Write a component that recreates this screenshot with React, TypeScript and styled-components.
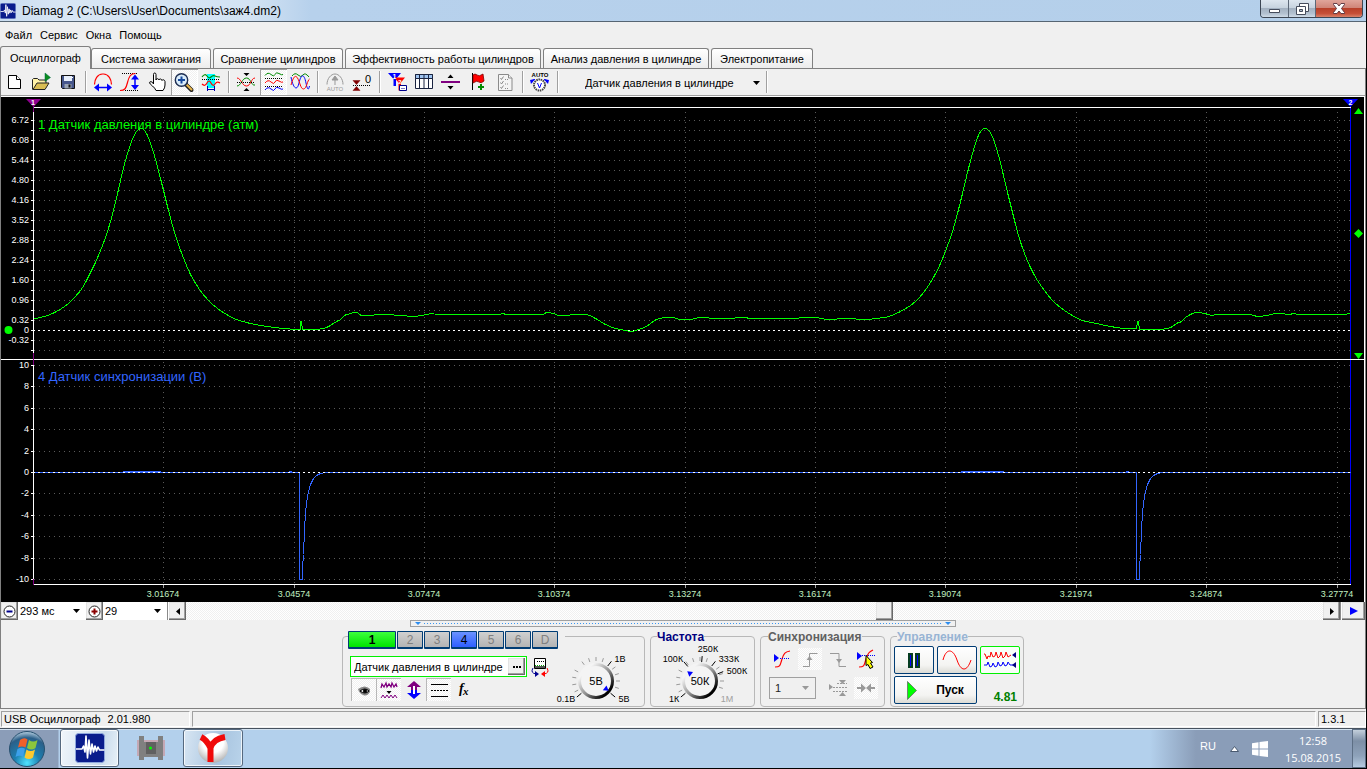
import React from 'react';
import styled, { createGlobalStyle, css } from 'styled-components';

const SANS = '"Liberation Sans", Arial, sans-serif';
const HUMANIST = '"Open Sans", "Noto Sans", sans-serif';
const FACE = '#f0f0f0';
const dither = 'repeating-conic-gradient(#ffffff 0 25%, #f0f0f0 0 50%) 0 0 / 2px 2px';

const GlobalStyle = createGlobalStyle`
  * { box-sizing: border-box; }
  body { margin: 0; background: ${FACE}; font: 11px/14px ${SANS}; color: #000; }
  button, input, select { font: inherit; color: inherit; margin: 0; padding: 0; border: 0; border-radius: 0; background: none; }
  svg { display: block; flex: none; }
`;

const Window = styled.div`
  display: flex;
  flex-direction: column;
  min-height: 100vh;
  border-right: 1px solid #000;
  border-bottom: 1px solid #000;
  background: ${FACE};
`;

/* ---------- title bar ---------- */
const TitleBar = styled.header`
  display: flex;
  align-items: flex-start;
  height: 22px;
  border-bottom: 1px solid #566573;
  background: linear-gradient(90deg, #c9dcf0 0, #d8e6f4 60px, #d3e3f3 250px, #b7d1ec 310px, #b4cfea 100%);
`;
const TitleIcon = styled.div`
  padding-top: 3px;
`;
const TitleText = styled.h1`
  flex: 1;
  margin: 0;
  padding-left: 6px;
  font: 400 12px/22px ${SANS};
`;
const Caption = styled.div`
  display: flex;
  margin-right: 3px;
  border: 1px solid #3c4654;
  border-top: 0;
  border-radius: 0 0 4px 4px;
  overflow: hidden;
`;
const CaptionButton = styled.button<{ $close?: boolean }>`
  display: grid;
  place-items: center;
  width: ${(p) => (p.$close ? 47 : 27)}px;
  height: 17px;
  background: ${(p) =>
    p.$close
      ? 'linear-gradient(#e0a59b 0, #d08578 45%, #b8402a 50%, #c65038 80%, #d9826a 100%)'
      : 'linear-gradient(#dde6ef 0, #c7d3df 45%, #a3b1c1 50%, #b3c1d0 80%, #cfdbe7 100%)'};
  & + & { border-left: 1px solid #5c6878; }
`;

/* ---------- menu and tabs ---------- */
const MenuBar = styled.nav`
  display: flex;
  align-items: center;
  gap: 8px;
  height: 24px;
  padding: 2px 5px 0;
`;
const MenuItem = styled.button`
  font: 11px/14px ${SANS};
`;
const Tabs = styled.div`
  display: flex;
  align-items: flex-end;
  gap: 2px;
  height: 23px;
  border-bottom: 1px solid #808080;
`;
const Tab = styled.button<{ $w: number; $active?: boolean }>`
  width: ${(p) => p.$w}px;
  height: 20px;
  border: 1px solid #808080;
  border-bottom: 0;
  border-radius: 3px 3px 0 0;
  background: linear-gradient(#ffffff, #ececec);
  ${(p) =>
    p.$active &&
    css`
      height: 23px;
      margin: 0 -2px -1px 0;
      background: ${FACE};
      z-index: 1;
    `}
`;

/* ---------- toolbar ---------- */
const Page = styled.main`
  border-left: 1px solid #808080;
  border-right: 1px solid #808080;
`;
const Toolbar = styled.div`
  display: flex;
  align-items: stretch;
  height: 28px;
  border-bottom: 1px solid #fff;
  box-shadow: inset 0 -1px 0 #a0a0a0;
`;
const ToolButton = styled.button<{ $pressed?: boolean }>`
  width: 27px;
  height: 26px;
  ${(p) =>
    p.$pressed &&
    css`
      background: ${dither};
      box-shadow: inset 1px 1px 0 #a0a0a0, inset -1px -1px 0 #fff;
    `}
`;
const Separator = styled.div`
  width: 8px;
  height: 22px;
  margin-top: 2px;
  background: linear-gradient(90deg, transparent 3px, #a0a0a0 3px 4px, #fff 4px 5px, transparent 5px);
`;
const SelectBox = styled.div<{ $w: number; $inset?: number; $arrow?: number; $bg?: string; $border?: string; $color?: string }>`
  display: grid;
  align-items: center;
  width: ${(p) => p.$w}px;
  background: ${(p) => p.$bg || 'transparent'};
  border: ${(p) => p.$border || '0'};
  color: ${(p) => p.$color || '#000'};
  select {
    grid-area: 1 / 1;
    width: 100%;
    height: 100%;
    padding-left: ${(p) => p.$inset || 0}px;
    appearance: none;
    outline: 0;
  }
  svg {
    grid-area: 1 / 1;
    justify-self: end;
    margin-right: ${(p) => p.$arrow || 4}px;
    pointer-events: none;
  }
`;

/* ---------- chart ---------- */
const Chart = styled.section`
  display: grid;
  grid-template-columns: 33px 1fr 13px;
  height: 505px;
  border-right: 1px solid #fff;
  background: #000;
  svg { overflow: visible; }
  svg text { font-family: ${SANS}; }
`;
const Plot = styled.div`
  position: relative;
  min-width: 0;
`;
const ChannelTitle = styled.div<{ $top: number; $color: string }>`
  position: absolute;
  left: 4px;
  top: ${(p) => p.$top}px;
  font-size: 13px;
  line-height: 16px;
  color: ${(p) => p.$color};
`;
const TimeLabel = styled.span`
  position: absolute;
  bottom: 2px;
  transform: translateX(-50%);
  font-size: 9px;
  line-height: 12px;
  color: #c0f0c0;
`;

/* ---------- scroll row ---------- */
const ScrollRow = styled.div`
  display: flex;
  height: 18px;
  background: #fff;
`;
const RaisedButton = styled.button<{ $w: number }>`
  display: grid;
  place-items: center;
  flex: none;
  width: ${(p) => p.$w}px;
  background: ${FACE};
  box-shadow: inset -1px -1px 0 #696969, inset -2px -2px 0 #a0a0a0, inset 1px 1px 0 #e3e3e3;
`;
const Divider = styled.div`
  width: 1px;
  margin-right: 1px;
  background: #8a8a8a;
`;
const ScrollTrack = styled.input`
  flex: 1;
  min-width: 0;
  height: 18px;
  appearance: none;
  background: ${dither};
  &::-webkit-slider-thumb {
    appearance: none;
    width: 17px;
    height: 18px;
    background: ${FACE};
    box-shadow: inset -1px -1px 0 #696969, inset -2px -2px 0 #a0a0a0, inset 1px 1px 0 #e3e3e3;
  }
`;

/* ---------- control panel ---------- */
const ControlPanel = styled.section`
  display: flex;
  flex-direction: column;
  align-items: center;
  gap: 4px;
  height: 88px;
`;
const Splitter = styled.div`
  display: flex;
  align-items: center;
  justify-content: space-between;
  gap: 3px;
  width: 546px;
  height: 7px;
  padding: 0 4px;
  border: 1px solid #a0a0a0;
`;
const SplitterDots = styled.div`
  flex: 1;
  height: 1px;
  background: repeating-linear-gradient(90deg, #3a96f0 0 1px, transparent 1px 3px);
`;
const Groups = styled.div`
  display: flex;
  gap: 5px;
`;
const Group = styled.fieldset<{ $w: number; $pad: string }>`
  width: ${(p) => p.$w}px;
  height: 76px;
  min-width: 0;
  margin: 0;
  padding: ${(p) => p.$pad};
  border: 1px solid #b8b8b8;
  border-radius: 4px;
`;
const Legend = styled.legend<{ $color?: string; $inset?: number }>`
  display: flex;
  gap: 1px;
  height: 10px;
  margin-left: ${(p) => p.$inset || 0}px;
  padding: 0;
  font: bold 12px/12px ${SANS};
  color: ${(p) => p.$color || '#000'};
`;
const ChannelLegend = styled(Legend)`
  padding-right: 7px;
  font: 12px/16px ${SANS};
`;
const ChannelButton = styled.button<{ $kind: 'main' | 'on' | 'off' }>`
  width: ${(p) => (p.$kind === 'main' ? 48 : 26)}px;
  height: 18px;
  border: 1px solid #003c74;
  border-bottom-width: 2px;
  border-radius: 1px;
  color: ${(p) => (p.$kind === 'off' ? '#808080' : '#000')};
  font-weight: ${(p) => (p.$kind === 'main' ? 'bold' : 'normal')};
  background: ${(p) =>
    p.$kind === 'main' ? 'linear-gradient(#3dff3d, #00e400)' : p.$kind === 'on' ? 'linear-gradient(#6a92ff, #2f5fff)' : 'linear-gradient(#d0d0d0, #b4b4b4)'};
`;
const ChannelBody = styled.div`
  display: flex;
  gap: 3px;
  padding-left: 2px;
`;
const ChannelColumn = styled.div`
  display: flex;
  flex-direction: column;
  gap: 1px;
  width: 200px;
  padding-top: 15px;
`;
const FieldRow = styled.div`
  display: flex;
  align-items: center;
  gap: 3px;
`;
const SensorField = styled.div`
  display: flex;
  width: 177px;
  height: 21px;
  padding: 1px;
  border: 1px solid #00f000;
  background: #fff;
  input { flex: 1; min-width: 0; padding-left: 2px; outline: 0; }
`;
const Row = styled.div`
  display: flex;
  padding-left: 1px;
`;
const FlatButton = styled.button<{ $pressed?: boolean }>`
  display: grid;
  place-items: center;
  width: 25px;
  height: 23px;
  ${(p) =>
    p.$pressed &&
    css`
      background: ${dither};
      box-shadow: inset 1px 1px 0 #b8b8b8;
    `}
`;
const SyncGrid = styled.div`
  display: grid;
  grid-template-columns: repeat(4, 28px);
  grid-auto-rows: 22px;
  row-gap: 7px;
  justify-items: center;
  padding-top: 7px;
`;
const SyncSelect = styled(SelectBox)`
  grid-column: span 2;
  justify-self: start;
  margin-left: 1px;
`;
const SyncButton = styled.button<{ $pressed?: boolean }>`
  display: grid;
  place-items: center;
  width: 24px;
  height: 22px;
  background: ${(p) => (p.$pressed ? dither : 'none')};
`;
const RunGrid = styled.div`
  display: grid;
  grid-template-columns: repeat(3, 40px);
  grid-auto-rows: 28px;
  gap: 2px 3px;
  padding-top: 5px;
`;
const RunButton = styled.button<{ $lime?: boolean; $wide?: boolean }>`
  display: flex;
  align-items: center;
  justify-content: center;
  gap: 19px;
  grid-column: span ${(p) => (p.$wide ? 2 : 1)};
  border: ${(p) => (p.$lime ? '1px solid #00f000' : '1px solid #003c74')};
  border-radius: 2px;
  font: bold 12px/16px ${SANS};
  background: ${(p) => (p.$lime ? '#f8fff8' : 'linear-gradient(#ffffff, #f4f4f2 70%, #dcdcd6)')};
`;
const Rate = styled.output`
  align-self: end;
  justify-self: end;
  padding-right: 3px;
  font: bold 12px/14px ${SANS};
  color: #008000;
`;

/* ---------- status bar ---------- */
const StatusBar = styled.footer`
  display: flex;
  gap: 2px;
  height: 20px;
  padding: 2px 0 1px 1px;
  border-top: 1px solid #808080;
  background: ${FACE};
`;
const StatusPane = styled.div<{ $w?: number }>`
  display: flex;
  gap: 7px;
  ${(p) => (p.$w ? `width: ${p.$w}px;` : 'flex: 1;')}
  padding-left: 2px;
  border: 1px solid #fff;
  border-top-color: #a0a0a0;
  border-left-color: #a0a0a0;
  line-height: 15px;
`;

/* ---------- taskbar ---------- */
const Taskbar = styled.div`
  display: flex;
  height: 40px;
  border-top: 1px solid #47525f;
  box-shadow: inset 0 1px 0 #d3e2f0;
  background: linear-gradient(90deg, #8b9db8 0 58px, #b3d0ec 59px calc(100% - 216px), #8a9db8 calc(100% - 170px) 100%);
`;
const StartButton = styled.button`
  display: grid;
  place-items: center;
  width: 54px;
  margin-right: 6px;
`;
const TaskButton = styled.button<{ $w: number; $tone?: 'active' | 'open' }>`
  display: grid;
  place-items: center;
  width: ${(p) => p.$w}px;
  height: 38px;
  ${(p) =>
    p.$tone &&
    css`
      border: 1px solid #56697f;
      border-radius: 3px;
      box-shadow: inset 0 0 0 1px rgba(255, 255, 255, 0.75);
      background: ${p.$tone === 'active' ? 'linear-gradient(100deg, #f1f6fb, #c9dbec 70%, #e8f1f8)' : 'linear-gradient(100deg, #d8e6f3, #a9c5e0 60%, #b9d3ea)'};
    `}
`;
const Tray = styled.div`
  display: flex;
  align-items: center;
  margin-left: auto;
  color: #fff;
`;
const Language = styled.span`
  width: 30px;
  margin-bottom: 6px;
`;
const TrayItem = styled.div<{ $gap: number }>`
  margin-right: ${(p) => p.$gap}px;
`;
const Clock = styled.time`
  width: 56px;
  margin-right: 11px;
  font: 11px/17px ${HUMANIST};
  text-align: center;
`;
const ShowDesktop = styled.button`
  width: 14px;
  height: 39px;
  border: 1px solid #5c6e84;
  background: linear-gradient(#c3cfdb, #7d8fa6 30%, #8ea2ba 70%, #b5cbe0);
`;

/* ---------- small drawings ---------- */
const Arrow = ({ color = '#000' }: { color?: string }) => (
  <svg width="7" height="4" viewBox="0 0 7 4" aria-hidden="true">
    <path d="M0 0h7L3.5 4z" fill={color} />
  </svg>
);
const SplitterMark = () => (
  <svg width="6" height="3" viewBox="0 0 6 3" aria-hidden="true">
    <path d="M0 0h6L3 3z" fill="#2a8cf0" />
  </svg>
);
const AppLogo = ({ size }: { size: number }) => (
  <svg width={size} height={size} viewBox="0 0 30 30" aria-hidden="true">
    <rect x="0.5" y="0.5" width="29" height="29" rx="3" fill="#0a1c8c" stroke="#8ea6dc" />
    <path d="M1 16h6l1.5-3 1.5 6 1-16 1.5 22 1.5-18 1.5 14 1.5-10 1.5 8 1.5-6 1.5 5 1.5-4 1.500 3h5" fill="none" stroke="#fff" strokeWidth="1.6" strokeLinejoin="round" />
  </svg>
);

const TOOL_ART: Record<string, React.ReactNode> = {
  new: (
    <g fill="#fff" stroke="#000">
      <path d="M7.500 6.500h8l4 4v9h-12z" />
      <path d="M15.500 6.500v4h4" />
    </g>
  ),
  open: (
    <g strokeLinejoin="round">
      <path d="M4.500 20.500v-10l1-1h4l1.500 1.500h7v3" fill="#fff2a8" stroke="#222" />
      <path d="M5 20.500l4-6.500h12l-4 6.500z" fill="#d9bd54" stroke="#222" />
      <path d="M17 4v8.500l5.500-4z" fill="#0a8c1e" stroke="#064" strokeWidth="0.500" />
    </g>
  ),
  save: (
    <g>
      <path d="M6.500 6.500h13v13h-12l-1-1z" fill="#47578c" stroke="#111" />
      <path d="M9 7h8v5H9z" fill="#e9f0fb" />
      <path d="M9.500 15h7v4.500h-7z" fill="#9aa4b4" />
      <path d="M13.500 15.500h2v3h-2z" fill="#111" />
      <path d="M17.500 8v1" stroke="#fff" />
    </g>
  ),
  width: (
    <g fill="none">
      <path d="M4.500 15.500c0-5 3-10.500 8-10.500h1c5 0 8 5.500 8 10.500" stroke="#f00" strokeWidth="1.200" />
      <path d="M7 18.500h12" stroke="#00f" strokeWidth="1.500" />
      <path d="M4 18.500l5-4v8zM22 18.500l-5-4v8z" fill="#00f" />
    </g>
  ),
  height: (
    <g fill="none">
      <path d="M5 4.500h15M8 21.500h14" stroke="#000" strokeDasharray="1 1" />
      <path d="M3 21.500c5 0 6-2 7.500-8s3-9 8-9" stroke="#f00" strokeWidth="1.200" />
      <path d="M18 8v11" stroke="#00f" strokeWidth="1.500" />
      <path d="M18 5.500l-4 5h8zM18 21l-4-5h8z" fill="#00f" />
    </g>
  ),
  hand: (
    <path
      d="M9.500 15V5.500q0-1.500 1.200-1.500t1.300 1.500V11q.3-1.500 1.500-1.300T15 11q.3-1.200 1.500-1T18 11.500q.3-1 1.500-.7t1.500 1.700V16q0 3-2 5.500h-7q-1-2.500-3.500-4.500-3-2.300-3-3.300t1.500-1 2.500 2.300z"
      fill="#fff"
      stroke="#000"
    />
  ),
  zoom: (
    <g>
      <path d="M15 15.500l5.500 5.500" stroke="#222" strokeWidth="4" strokeLinecap="round" />
      <path d="M16 16l4.500 4.500" stroke="#e8b54a" strokeWidth="2" strokeLinecap="round" />
      <circle cx="10.500" cy="11" r="6.200" fill="#d9ecfb" stroke="#1c2c50" strokeWidth="1.400" />
      <path d="M10.500 7.500v7M7 11h7" stroke="#16489c" strokeWidth="2" />
    </g>
  ),
  band: (
    <g fill="none">
      <path d="M9 5h8v14H9z" fill="#0ff" />
      <path d="M4 8q3-4 5-1t4 1 4-1 5 1" stroke="#008a00" strokeWidth="1.200" />
      <path d="M4 10.500h18" stroke="#000" strokeDasharray="1 1" />
      <path d="M4 15q3 3 5-1t4 0 4 1 5-1" stroke="#f00" strokeWidth="1.200" />
      <path d="M9.500 17v5M16.500 17v5M10 20.500h6" stroke="#00a" />
    </g>
  ),
  cross: (
    <g fill="none">
      <path d="M4 17c4 0 5-8 9.500-8s4.500 8 8.500 7" stroke="#008a00" />
      <path d="M4 9c4 0 5 8 9.500 8s4.500-8 8.500-8" stroke="#f00" />
      <path d="M4 13.500h18" stroke="#000" strokeDasharray="1 1" />
      <path d="M10.500 4h6l-3 3zM10.500 22h6l-3-3z" fill="#000" />
    </g>
  ),
  stack: (
    <g fill="none">
      <path d="M5 6.500q3-4 6-1t4 0 4-1 4 1" stroke="#008a00" />
      <path d="M5 14q3-4 6-1t4 0 4-1 4 1" stroke="#f00" />
      <path d="M5 21q3-4 6-1t4 0 4-1 4 1" stroke="#00f" />
      <path d="M5 9.500h18M5 17.500h18" stroke="#000" strokeDasharray="1 1" />
    </g>
  ),
  overlap: (
    <g fill="none">
      <path d="M5 7q3-4 6-1t5 0 6 2" stroke="#008a00" />
      <path d="M4 8c2 11 6 15 8 6s5-10 7 0 3 5 3.500 3" stroke="#00f" />
      <path d="M4 16c2-7 4-11 6.500-7s3 11 6 11 4-9 6-10" stroke="#f00" />
    </g>
  ),
  auto: (
    <g fill="none" stroke="#999">
      <path d="M5 15.500c0-6 4-10.500 8-10.500s8 4.500 8 10.500M13 8v8" />
      <path d="M10 11l3-4 3 4z" fill="#999" />
      <text x="13" y="22" fontSize="6" textAnchor="middle" fill="#999" stroke="none">AUTO</text>
    </g>
  ),
  zero: (
    <g>
      <path d="M4 11.500h7l-3.500 4zM4 21.500h7l-3.500-4z" fill="#800000" stroke="#800000" strokeWidth="0.500" />
      <path d="M4 16.500h18" stroke="#000" strokeDasharray="1 1" />
      <text x="19" y="14" fontSize="11" textAnchor="middle">0</text>
    </g>
  ),
  markers: (
    <g>
      <path d="M4 4h13l-5 6v7H9.500v-7z" fill="#00f" />
      <path d="M10 8.500h11l-4 5v8h-2.500v-8z" fill="#f00" />
      <text x="10.500" y="9.500" fontSize="7" fontWeight="bold" textAnchor="middle" fill="#fff">1</text>
      <text x="16" y="14.500" fontSize="6" fontWeight="bold" textAnchor="middle" fill="#fff">2</text>
      <path d="M15.500 16.500h7v5h-7z" fill="#fff" stroke="#00008b" />
      <path d="M17.500 19.500h3" stroke="#00008b" strokeDasharray="1 1" />
    </g>
  ),
  table: (
    <g fill="#fff" stroke="#1a2440">
      <path d="M4.500 5.500h17v14h-17z" />
      <path d="M4.500 5.500h17v4h-17z" fill="#9fc4f0" />
      <path d="M8.500 5.500v14M13 5.500v14M17.500 5.500v14" />
    </g>
  ),
  split: (
    <g>
      <path d="M3 13h19" stroke="#800080" strokeWidth="2" />
      <path d="M9.500 9h6l-3-3.500zM9.500 17h6l-3 3.500z" />
    </g>
  ),
  flag: (
    <g>
      <path d="M7.500 4v17" stroke="#000" />
      <path d="M8 6q2-2 4 0t6-1l1 7q-3 3-5 1t-6 1z" fill="#f00" stroke="#800000" strokeWidth="0.800" />
      <path d="M16 15v6M13 18h6" stroke="#008a00" strokeWidth="2" />
    </g>
  ),
  checklist: (
    <g fill="#f4f4f4" stroke="#8a8a8a">
      <path d="M6.500 5.500h10l3.500 3.500v12.500h-13.500z" />
      <path d="M16.500 5.500v3.500h3.500" />
      <path d="M8.500 9l1 1.500 2-3M8.500 13.500l1 1.500 2-3M8.500 18l1 1.500 2-3" fill="none" />
      <path d="M13 10.500h4M13 15h4M13 19.500h4" strokeDasharray="1 1" />
    </g>
  ),
  autoVolt: (
    <g>
      <text x="13" y="8" fontSize="6" fontWeight="bold" textAnchor="middle">AUTO</text>
      <circle cx="12.500" cy="16" r="5.500" fill="#fff" stroke="#444" strokeWidth="2" strokeDasharray="1.500 0.700" />
      <path d="M10.500 14l2 5 2-5" fill="none" stroke="#00f" />
      <path d="M8 10.500q-2 0-3.500 3M17 10.500q2 0 3.500 3" stroke="#00f" strokeWidth="1.200" fill="none" />
      <path d="M3 11l5-1-4 5zM22 11l-5-1 4 5z" fill="#00f" />
    </g>
  ),
};
const ToolIcon = ({ name }: { name: string }) => (
  <svg width="27" height="26" viewBox="0 0 27 26" aria-hidden="true">
    {TOOL_ART[name]}
  </svg>
);
type Tool = [name: string, label: string, pressed?: boolean];
const TOOL_GROUPS: Tool[][] = [
  [['new', 'Новый'], ['open', 'Открыть'], ['save', 'Сохранить']],
  [['width', 'По ширине'], ['height', 'По высоте'], ['hand', 'Рука'], ['zoom', 'Лупа', true], ['band', 'Полоса']],
  [['cross', 'Совместить'], ['stack', 'Разнести', true], ['overlap', 'Наложить']],
  [['auto', 'Авто'], ['zero', 'Ноль']],
  [['markers', 'Маркеры'], ['table', 'Таблица'], ['split', 'Разделить'], ['flag', 'Метка'], ['checklist', 'Список']],
  [['autoVolt', 'Авто вольт']],
];

/* ---------- chart data ---------- */
type Pt = [number, number];
const PRESSURE_A: Pt[] = [
  [34, 318], [40, 317], [47, 315], [54, 312], [61, 308], [68, 303], [74, 297], [80, 290], [85, 282], [90, 272], [95, 262], [100, 250], [105, 237],
  [110, 221], [115, 202], [120, 180], [125, 160], [131, 141], [136, 131], [140, 128], [143, 129], [147, 135], [153, 152], [160, 178], [167, 206],
  [174, 232], [182, 255], [190, 274], [199, 289], [208, 300], [217, 308], [226, 314], [236, 319], [250, 323], [267, 326], [283, 328], [298, 329],
];
const PRESSURE_B: Pt[] = [
  [303, 329], [316, 329], [326, 327], [336, 321], [340, 319], [344, 315], [350, 313], [353, 312], [357, 312], [361, 315], [370, 315], [380, 314],
  [402, 315], [412, 316], [421, 315], [432, 313], [440, 314], [494, 314], [502, 313], [508, 314], [540, 314], [546, 312], [553, 313], [558, 315],
  [566, 315], [574, 314], [586, 314], [595, 318], [605, 324], [615, 328], [625, 330], [631, 331], [638, 329], [644, 327], [650, 323], [656, 319],
  [664, 317], [672, 317], [680, 319], [690, 319], [700, 317], [715, 318], [730, 318], [740, 317], [755, 318], [790, 318], [804, 317], [815, 317],
  [828, 319], [845, 318], [865, 319], [875, 318], [884, 317], [891, 315], [900, 311], [910, 305], [918, 298], [926, 288], [933, 277], [940, 263],
  [946, 248], [952, 231], [957, 213], [962, 193], [967, 172], [972, 153], [977, 137], [981, 130], [985, 128], [989, 131], [993, 139], [998, 155],
  [1003, 175], [1008, 196], [1013, 216], [1018, 235], [1024, 253], [1030, 267], [1037, 280], [1044, 290], [1052, 300], [1060, 307], [1070, 314],
  [1082, 320], [1096, 323], [1110, 326], [1124, 328], [1135, 328],
];
const PRESSURE_C: Pt[] = [
  [1140, 329], [1160, 329], [1170, 327], [1176, 323], [1181, 321], [1185, 317], [1190, 314], [1196, 312], [1204, 313], [1212, 315], [1217, 314],
  [1248, 314], [1257, 316], [1266, 315], [1275, 313], [1282, 313], [1288, 314], [1294, 313], [1300, 314], [1340, 314], [1350, 313],
];
const SYNC_DECAY: Pt[] = [
  [302, 579], [302, 568], [303, 554], [304, 530], [305, 512], [307, 495], [310, 484], [313, 478], [316, 475], [320, 473], [325, 472],
];

const smooth = (pts: Pt[]) => {
  let d = `M${pts[0][0]} ${pts[0][1]}`;
  for (let i = 0; i < pts.length - 1; i += 1) {
    const p0 = pts[Math.max(0, i - 1)];
    const p1 = pts[i];
    const p2 = pts[i + 1];
    const p3 = pts[Math.min(pts.length - 1, i + 2)];
    d += `C${p1[0] + (p2[0] - p0[0]) / 6} ${p1[1] + (p2[1] - p0[1]) / 6} ${p2[0] - (p3[0] - p1[0]) / 6} ${p2[1] - (p3[1] - p1[1]) / 6} ${p2[0]} ${p2[1]}`;
  }
  return d;
};
const polyline = (pts: Pt[], dx = 0) => pts.map(([x, y]) => `L${x + dx} ${y}`).join('');

const PRESSURE_PATH = `${smooth(PRESSURE_A)}L300 329L300 321L301 321L302 329L303 329${smooth(PRESSURE_B)}L1136 328L1137 321L1138 321L1139 329L1140 329${smooth(PRESSURE_C)}`;
const SYNC_PATH = `M34 472H299V579H302${polyline(SYNC_DECAY)}H1136V579H1139${polyline(SYNC_DECAY, 837)}H1350M122 471H160M288 471H291M960 471H1003M1125 471H1128`;

const UPPER_ROWS = Array.from({ length: 24 }, (_, i) => 120 + i * 10);
const UPPER_LABELS: [string, number][] = [
  ['6.72', 120], ['6.08', 140], ['5.44', 160], ['4.80', 180], ['4.16', 200], ['3.52', 220], ['2.88', 240], ['2.24', 260],
  ['1.60', 280], ['0.96', 300], ['0.32', 320], ['0', 330], ['-0.32', 340],
];
const LOWER_LABELS: [string, number][] = [
  ['10', 365], ['8', 386], ['6', 408], ['4', 429], ['2', 451], ['0', 472], ['-2', 493], ['-4', 515], ['-6', 536], ['-8', 558], ['-10', 579],
];
const TIMES: [string, number][] = [
  ['3.01674', 163], ['3.04574', 294], ['3.07474', 424], ['3.10374', 554], ['3.13274', 685], ['3.16174', 815], ['3.19074', 945],
  ['3.21974', 1076], ['3.24874', 1206], ['3.27774', 1337],
];
const PLOT_LEFT = 34;
const PLOT_WIDTH = 1317;

const ValueAxis = () => (
  <svg width="33" height="505" viewBox="1 97 33 505" role="img" aria-label="Шкала значений">
    <g shapeRendering="crispEdges" stroke="#fff">
      <path d="M33.500 112V353M33.500 365V584M1 359.500H34M33 107.500H34" />
      <path d={[...UPPER_ROWS, ...LOWER_LABELS.map((l) => l[1])].map((y) => `M31 ${y}.500H34`).join('')} />
      <path d="M33.500 106V112M33.500 353V365M33.500 579V585" stroke="#800080" />
    </g>
    <path d="M26 99h15l-7.500 8z" fill="#900090" />
    <text x="33" y="105" fontSize="7" fontWeight="bold" textAnchor="middle" fill="#fff">1</text>
    <circle cx="8.500" cy="330" r="4" fill="#00ff00" />
    {[...UPPER_LABELS, ...LOWER_LABELS].map(([label, y], i) => (
      <text key={i} x="29" y={y + 3} fontSize="9" textAnchor="end" fill="#fff">
        {label}
      </text>
    ))}
  </svg>
);

const Waves = () => (
  <svg width="100%" height="505" viewBox={`${PLOT_LEFT} 97 ${PLOT_WIDTH} 505`} preserveAspectRatio="none" role="img" aria-label="Осциллограмма">
    <g shapeRendering="crispEdges" fill="none">
      <g stroke="#5a5a5a" strokeDasharray="1 4">
        {[...UPPER_ROWS, ...LOWER_LABELS.map((l) => l[1])].map((y) => (
          <path key={y} d={`M34 ${y}.500H1350`} />
        ))}
        {TIMES.map(([, x]) => (
          <path key={x} d={`M${x}.500 112V357M${x}.500 362V583`} />
        ))}
      </g>
      <path d={TIMES.map(([, x]) => `M${x}.500 585V588`).join('')} stroke="#a0a0a0" />
      <path d="M34 107.500H1351M34 359.500H1351M34 584.500H1351" stroke="#fff" />
      <path d={SYNC_PATH} stroke="#3366ff" transform="translate(.5 .5)" />
      <path d="M33 330.500H1350M33 472.500H1350" stroke="#fff" strokeDasharray="2 3" />
      <path d={PRESSURE_PATH} stroke="#00ff00" transform="translate(.5 .5)" />
    </g>
  </svg>
);

const LevelStrip = () => (
  <svg width="13" height="505" viewBox="1351 97 13 505" aria-hidden="true">
    <path d="M1351 359.500h13" stroke="#fff" shapeRendering="crispEdges" />
    <path d="M1350.500 104V585" stroke="#0000ff" shapeRendering="crispEdges" />
    <path d="M1343 99h15l-7.500 8z" fill="#0000ff" />
    <text x="1350.500" y="105" fontSize="7" fontWeight="bold" textAnchor="middle" fill="#fff">2</text>
    <path d="M1354 114h9l-4.500-6zM1354 353h9l-4.500 6zM1358.500 229l4.500 4.500-4.500 4.500-4.500-4.500z" fill="#00ff00" />
  </svg>
);

/* ---------- knobs ---------- */
type KnobMark = { angle: number; label: string; x: number; y: number; dim?: boolean };
const Knob = ({ id, width, cx, value, pointer, marks }: { id: string; width: number; cx: number; value: string; pointer: number; marks: KnobMark[] }) => {
  const cy = 40;
  const spoke = (angle: number, r1: number, r2: number) => {
    const a = ((angle - 90) * Math.PI) / 180;
    return `M${cx + Math.cos(a) * r1} ${cy + Math.sin(a) * r1}L${cx + Math.cos(a) * r2} ${cy + Math.sin(a) * r2}`;
  };
  const minor = [-117, -99, -81, -63, -36, -18, 0, 18, 54, 72, 90, 108];
  return (
    <svg width={width} height="64" viewBox={`0 0 ${width} 64`} role="img" aria-label={value} fontFamily={SANS} fontSize="9">
      <defs>
        <linearGradient id={id} x1="0" y1="0" x2="1" y2="1">
          <stop offset="0.200" stopColor="#f4f4f4" />
          <stop offset="0.550" stopColor="#8a8a8a" />
          <stop offset="0.850" stopColor="#000" />
        </linearGradient>
      </defs>
      <path d={minor.map((a) => spoke(a, 20, 24)).join('')} stroke="#9a9a9a" />
      <path d={marks.filter((m) => !m.dim).map((m) => spoke(m.angle, 19, 25)).join('')} stroke="#000" />
      <circle cx={cx} cy={cy} r="16.500" fill="#f4f4f4" stroke={`url(#${id})`} strokeWidth="3" />
      <path d={`M${cx - 3} ${cy - 11}h6l-3 -5z`} fill="#0000ff" transform={`rotate(${pointer} ${cx} ${cy})`} />
      <text x={cx} y={cy + 4} fontSize="11" textAnchor="middle">{value}</text>
      {marks.map((m) => (
        <text key={m.label} x={m.x} y={m.y} textAnchor="middle" fill={m.dim ? '#a0a0a0' : '#000'}>
          {m.label}
        </text>
      ))}
    </svg>
  );
};

const Icon20 = ({ children }: { children: React.ReactNode }) => (
  <svg width="20" height="20" viewBox="0 0 20 20" fill="none" aria-hidden="true">
    {children}
  </svg>
);

export default function App() {
  return (
    <Window>
      <GlobalStyle />
      <TitleBar>
        <TitleIcon><AppLogo size={16} /></TitleIcon>
        <TitleText>Diamag 2 (C:\Users\User\Documents\заж4.dm2)</TitleText>
        <Caption>
          <CaptionButton aria-label="Свернуть">
            <svg width="13" height="10" viewBox="0 0 13 10"><path d="M1.500 5.500h10v3h-10z" fill="#fff" stroke="#454c5c" /></svg>
          </CaptionButton>
          <CaptionButton aria-label="Восстановить">
            <svg width="13" height="12" viewBox="0 0 13 12">
              <path d="M3.500 .5h9v8h-9z" fill="#fff" stroke="#454c5c" />
              <path d="M.5 3.500h9v8h-9z" fill="#fff" stroke="#454c5c" />
              <path d="M3.500 6.500h3v2h-3z" fill="#a8b6c6" stroke="#454c5c" />
            </svg>
          </CaptionButton>
          <CaptionButton $close aria-label="Закрыть">
            <svg width="12" height="11" viewBox="0 0 12 11">
              <path d="M.5.5h3.500l2 2.500 2-2.500h3.500v1l-3 4 3 4v1h-3.500l-2-2.500-2 2.500h-3.500v-1l3-4-3-4z" fill="#fff" stroke="#54303a" strokeWidth="0.900" />
            </svg>
          </CaptionButton>
        </Caption>
      </TitleBar>

      <MenuBar>
        {['Файл', 'Сервис', 'Окна', 'Помощь'].map((m) => <MenuItem key={m}>{m}</MenuItem>)}
      </MenuBar>
      <Tabs role="tablist">
        <Tab role="tab" aria-selected $active $w={91}>Осциллограф</Tab>
        <Tab role="tab" $w={120}>Система зажигания</Tab>
        <Tab role="tab" $w={130}>Сравнение цилиндров</Tab>
        <Tab role="tab" $w={196}>Эффективность работы цилиндров</Tab>
        <Tab role="tab" $w={166}>Анализ давления в цилиндре</Tab>
        <Tab role="tab" $w={102}>Электропитание</Tab>
      </Tabs>

      <Page>
        <Toolbar role="toolbar">
          {TOOL_GROUPS.map((group, i) => (
            <React.Fragment key={i}>
              {group.map(([name, label, pressed]) => (
                <ToolButton key={name} aria-label={label} $pressed={pressed}><ToolIcon name={name} /></ToolButton>
              ))}
              <Separator />
            </React.Fragment>
          ))}
          <SelectBox $w={201} $inset={23} $arrow={3}>
            <select aria-label="Датчик"><option>Датчик давления в цилиндре</option></select>
            <Arrow />
          </SelectBox>
          <Separator />
        </Toolbar>

        <Chart>
          <ValueAxis />
          <Plot>
            <Waves />
            <ChannelTitle $top={20} $color="#00ff00">1 Датчик давления в цилиндре (атм)</ChannelTitle>
            <ChannelTitle $top={272} $color="#3366ff">4 Датчик синхронизации (В)</ChannelTitle>
            {TIMES.map(([label, x]) => (
              <TimeLabel key={label} style={{ left: `${((x - PLOT_LEFT) / PLOT_WIDTH) * 100}%` }}>{label}</TimeLabel>
            ))}
          </Plot>
          <LevelStrip />
        </Chart>

        <ScrollRow>
          <RaisedButton $w={17} aria-label="Уменьшить">
            <svg width="13" height="13" viewBox="0 0 13 13"><circle cx="6.500" cy="6.500" r="5.500" fill="#fff" stroke="#222" /><path d="M3.500 6.500h6" stroke="#00008b" strokeWidth="2" /></svg>
          </RaisedButton>
          <SelectBox $w={68} $inset={2} $arrow={6}>
            <select aria-label="Развёртка"><option>293 мс</option></select>
            <Arrow />
          </SelectBox>
          <RaisedButton $w={17} aria-label="Увеличить">
            <svg width="13" height="13" viewBox="0 0 13 13"><circle cx="6.500" cy="6.500" r="5.500" fill="#fff" stroke="#222" /><path d="M3.500 6.500h6M6.500 3.500v6" stroke="#8b0000" strokeWidth="2" /></svg>
          </RaisedButton>
          <SelectBox $w={64} $inset={2} $arrow={6}>
            <select aria-label="Номер кадра"><option>29</option></select>
            <Arrow />
          </SelectBox>
          <Divider />
          <RaisedButton $w={17} aria-label="Влево">
            <svg width="4" height="7" viewBox="0 0 4 7"><path d="M4 0v7L0 3.500z" /></svg>
          </RaisedButton>
          <ScrollTrack type="range" min={0} max={1000} defaultValue={616} aria-label="Прокрутка" />
          <RaisedButton $w={17} aria-label="Вправо">
            <svg width="4" height="7" viewBox="0 0 4 7"><path d="M0 0v7l4-3.500z" /></svg>
          </RaisedButton>
          <Divider />
          <RaisedButton $w={23} aria-label="Воспроизвести">
            <svg width="8" height="8" viewBox="0 0 8 8"><path d="M0 0v8l8-4z" fill="#00f" /></svg>
          </RaisedButton>
        </ScrollRow>

        <ControlPanel>
          <Splitter><SplitterMark /><SplitterDots /><SplitterMark /></Splitter>
          <Groups>
            <Group $w={303} $pad="0 5px">
              <ChannelLegend>
                <ChannelButton $kind="main">1</ChannelButton>
                {['2', '3', '4', '5', '6', 'D'].map((c) => (
                  <ChannelButton key={c} $kind={c === '4' ? 'on' : 'off'}>{c}</ChannelButton>
                ))}
              </ChannelLegend>
              <ChannelBody>
                <ChannelColumn>
                  <FieldRow>
                    <SensorField>
                      <input aria-label="Название датчика" defaultValue="Датчик давления в цилиндре" />
                      <RaisedButton $w={17} aria-label="Выбрать датчик">
                        <svg width="8" height="2" viewBox="0 0 8 2"><path d="M0 0h2v2H0zM3 0h2v2H3zM6 0h2v2H6z" /></svg>
                      </RaisedButton>
                    </SensorField>
                    <Icon20>
                      <path d="M4.500 1.500h11v10h-11z" fill="#fff" stroke="#000" />
                      <path d="M5 9h10v2H5z" fill="#555" />
                      <path d="M7 4.500h7" stroke="#000" strokeDasharray="1 1" />
                      <path d="M5 8.500h10" stroke="#0a0" strokeDasharray="1 1" />
                      <path d="M3 11q-3 5 3 6" stroke="#000090" />
                      <path d="M5 14v6l4-3z" fill="#000090" />
                      <path d="M17 11q3 5-3 6" stroke="#f00" />
                      <path d="M15 14v6l-4-3z" fill="#f00" />
                    </Icon20>
                  </FieldRow>
                  <Row>
                    <FlatButton $pressed aria-label="Показать">
                      <Icon20>
                        <path d="M4 9q7-5 12 0v3q-3 5-7 3-4-2-5-6z" fill="#888" />
                        <path d="M6 11q5-4 9 0-4 4-9 0z" fill="#ddd" stroke="#000" />
                        <circle cx="11" cy="11" r="2" fill="#000" />
                      </Icon20>
                    </FlatButton>
                    <FlatButton $pressed aria-label="Фильтр">
                      <Icon20>
                        <path d="M2 8l1-4 2 3 2-4 1 4 2-3 2 3 1-4 2 4 2-3 1 3" stroke="#800080" strokeWidth="1.300" />
                        <path d="M7.500 11h5l-2.500 3z" fill="#000" />
                        <path d="M2 18l2-3 2 3 2-3 2 3 2-3 2 3 2-3 2 3" stroke="#800080" />
                      </Icon20>
                    </FlatButton>
                    <FlatButton aria-label="Сместить">
                      <Icon20>
                        <path d="M10 1l7 6h-4v3H7V7H3z" fill="#800080" />
                        <path d="M10 19l7-6h-4v-3H7v3H3z" fill="#0000ff" />
                        <path d="M10 6v8" stroke="#fff" strokeWidth="2" />
                      </Icon20>
                    </FlatButton>
                    <FlatButton $pressed aria-label="Линии">
                      <Icon20>
                        <path d="M2 4.500h17M2 16.500h17" stroke="#000" />
                        <path d="M2 10.500h17" stroke="#000" strokeDasharray="2 1" />
                      </Icon20>
                    </FlatButton>
                    <FlatButton aria-label="Функция">
                      <svg width="20" height="20" viewBox="0 0 20 20" fontFamily='"Liberation Serif", serif' fontStyle="italic" fontWeight="bold">
                        <text x="5" y="13" fontSize="14">f</text>
                        <text x="9" y="15" fontSize="11">x</text>
                      </svg>
                    </FlatButton>
                  </Row>
                </ChannelColumn>
                <Knob
                  id="volt" width={84} cx={43} value="5В" pointer={128}
                  marks={[
                    { angle: 38, label: '1В', x: 67, y: 21 },
                    { angle: 130, label: '5В', x: 71, y: 61 },
                    { angle: -130, label: '0.1В', x: 13, y: 61 },
                  ]}
                />
              </ChannelBody>
            </Group>

            <Group $w={105} $pad="0">
              <Legend $color="#000080" $inset={6}>Частота</Legend>
              <Knob
                id="rate" width={103} cx={49} value="50К" pointer={-53}
                marks={[
                  { angle: -130, label: '1К', x: 23, y: 61 },
                  { angle: -40, label: '100К', x: 22, y: 21 },
                  { angle: 5, label: '250К', x: 57, y: 11 },
                  { angle: 38, label: '333К', x: 78, y: 21 },
                  { angle: 68, label: '500К', x: 86, y: 33 },
                  { angle: 130, label: '1М', x: 76, y: 61, dim: true },
                ]}
              />
            </Group>

            <Group $w={125} $pad="0 4px 0 7px">
              <Legend $color="#606060">Синхронизация</Legend>
              <SyncGrid>
                <SyncButton aria-label="Режим синхронизации">
                  <Icon20>
                    <path d="M3 18c6 0 5-2 7-8s3-7 8-8" stroke="#f00" strokeWidth="1.200" />
                    <path d="M8 9.500h10" stroke="#00f" strokeDasharray="1 1" />
                    <path d="M2 5v8l5-4z" fill="#00f" />
                  </Icon20>
                </SyncButton>
                <SyncButton $pressed aria-label="Фронт">
                  <Icon20><path d="M3 17.500h6.500v-13h8M9.500 7v8" stroke="#999" /><path d="M6.500 11h6l-3-4z" fill="#999" /></Icon20>
                </SyncButton>
                <SyncButton aria-label="Спад">
                  <Icon20><path d="M2 4.500h9v13h7" stroke="#999" /><path d="M8 10h6l-3 4z" fill="#999" /></Icon20>
                </SyncButton>
                <SyncButton aria-label="Захват">
                  <Icon20>
                    <path d="M3 18c6 0 5-2 7-8s3-7 7-9" stroke="#f00" strokeWidth="1.200" />
                    <path d="M6 6.500h13" stroke="#00f" strokeDasharray="1 1" />
                    <path d="M1 3v8l5-4z" fill="#00f" />
                    <path d="M10 6.500l6.500 7-2 .5 2.500 4-3 1.500-2-4-2 1z" fill="#ff0" stroke="#000" />
                  </Icon20>
                </SyncButton>
                <SyncSelect $w={47} $inset={5} $arrow={6} $border="1px solid #a0a0a0" $color="#222">
                  <select aria-label="Канал синхронизации"><option>1</option></select>
                  <Arrow color="#999" />
                </SyncSelect>
                <SyncButton aria-label="Уровень">
                  <Icon20>
                    <path d="M1 6v6l4-3z" fill="#999" />
                    <path d="M5 9.500h14M5 13.500h14M9 5.500h10" stroke="#999" strokeDasharray="2 1" />
                    <path d="M11 2h7l-3.500 4zM11 18h7l-3.500-4z" fill="#999" />
                  </Icon20>
                </SyncButton>
                <SyncButton $pressed aria-label="Центрировать">
                  <Icon20><path d="M1 10h7M12 10h7" stroke="#999" strokeWidth="2" /><path d="M5 5.500v9l5-4.500zM15 5.500v9l-5-4.500z" fill="#999" /></Icon20>
                </SyncButton>
              </SyncGrid>
            </Group>

            <Group $w={134} $pad="0 3px">
              <Legend $color="#98b4d4" $inset={3}>Управление</Legend>
              <RunGrid>
                <RunButton aria-label="Пауза">
                  <svg width="12" height="15" viewBox="0 0 12 15"><path d="M1 1h3v13H1zM8 1h3v13H8z" fill="#00f" stroke="#063c20" strokeWidth="2" /></svg>
                </RunButton>
                <RunButton aria-label="Синус">
                  <svg width="30" height="20" viewBox="0 0 30 20" fill="none"><path d="M1 10c3-12 10-12 14 0s10 12 14 0" stroke="#f00" /></svg>
                </RunButton>
                <RunButton $lime aria-label="Два луча">
                  <svg width="34" height="20" viewBox="0 0 34 20" fill="none">
                    <path d="M1 4h1l2 5 1-3 2 1 1-5 2 5 2-1 1-4 2 6 2-2 1-4 2 6 2-2 1-4 2 5 3-2" stroke="#f00" />
                    <path d="M1 15h3l1-3 2 5 2-1 1-3 2 4 2-1 1-4 2 4 2-1 1-3 2 4 2-1 1-3 2 3h3" stroke="#00f" />
                    <path d="M33 2v6l-4-3zM33 12v6l-4-3z" fill="#000080" />
                  </svg>
                </RunButton>
                <RunButton $wide>
                  <svg width="10" height="19" viewBox="0 0 10 19"><path d="M.5.5v18l9-9z" fill="#00ff00" stroke="#6a8a6a" /></svg>
                  Пуск
                </RunButton>
                <Rate>4.81</Rate>
              </RunGrid>
            </Group>
          </Groups>
        </ControlPanel>
      </Page>

      <StatusBar>
        <StatusPane $w={189}><span>USB Осциллограф</span><span>2.01.980</span></StatusPane>
        <StatusPane />
        <StatusPane $w={48}>1.3.1</StatusPane>
      </StatusBar>

      <Taskbar>
        <StartButton aria-label="Пуск системы">
          <svg width="36" height="36" viewBox="0 0 36 36">
            <defs>
              <radialGradient id="orb" cx="0.500" cy="0.900" r="0.900">
                <stop offset="0" stopColor="#4fe3ff" />
                <stop offset="0.400" stopColor="#1c7fb0" />
                <stop offset="0.800" stopColor="#2b5f88" />
                <stop offset="1" stopColor="#b8d0e2" />
              </radialGradient>
            </defs>
            <circle cx="18" cy="18" r="17.500" fill="url(#orb)" stroke="#27506f" />
            <path d="M11 9q4-3 7.500-.5l-2 8Q13 14.500 9 16.500z" fill="#f0602a" />
            <path d="M20 9q4 3 8.500 0l-2 8q-4 3-8.500 0z" fill="#8cc63c" />
            <path d="M8.500 18q4-2.500 7.500-.3l-2 8Q10.500 23.500 6.500 26z" fill="#3ca0ea" />
            <path d="M17.500 18.500q4 3 8.500 0l-2 8q-4 3-8.500 0z" fill="#fcc92e" />
          </svg>
        </StartButton>
        <TaskButton $w={59} $tone="active" aria-label="Diamag 2"><AppLogo size={30} /></TaskButton>
        <TaskButton $w={64} aria-label="Диагностика">
          <svg width="28" height="24" viewBox="0 0 28 24">
            <path d="M0 4h28v16H0z" fill="#c4a8b4" />
            <path d="M2 0h5v6h14V0h5v24h-5v-3H7v3H2z" fill="#808080" />
            <path d="M9 6h10v12H9z" fill="#606060" />
            <circle cx="13.500" cy="12" r="1.500" fill="#0f0" />
          </svg>
        </TaskButton>
        <TaskButton $w={60} $tone="open" aria-label="Браузер">
          <svg width="32" height="32" viewBox="0 0 32 32">
            <defs>
              <radialGradient id="ball" cx="0.500" cy="0.300" r="0.700">
                <stop offset="0.500" stopColor="#fff" />
                <stop offset="1" stopColor="#b0b0b0" />
              </radialGradient>
            </defs>
            <circle cx="16" cy="16" r="15" fill="url(#ball)" />
            <path d="M4 5q6 3 9.500 11v14M28 5q-12 2-14.500 11" fill="none" stroke="#f00a0a" strokeWidth="6" />
          </svg>
        </TaskButton>
        <Tray>
          <Language>RU</Language>
          <TrayItem $gap={13}>
            <svg width="9" height="6" viewBox="0 0 9 6"><path d="M.5 5.500h8l-4-5z" fill="#fff" stroke="#4a5a70" /></svg>
          </TrayItem>
          <TrayItem $gap={17}>
            <svg width="16" height="16" viewBox="0 0 16 16"><path d="M0 2.200l6.500-1v6.300H0zM7.500 1l8.500-1v7.500H7.500zM0 8.500h6.500v6.300L0 13.800zM7.500 8.500H16V16l-8.500-1z" fill="#fff" /></svg>
          </TrayItem>
          <Clock>12:58<br />15.08.2015</Clock>
          <ShowDesktop aria-label="Показать рабочий стол" />
        </Tray>
      </Taskbar>
    </Window>
  );
}
